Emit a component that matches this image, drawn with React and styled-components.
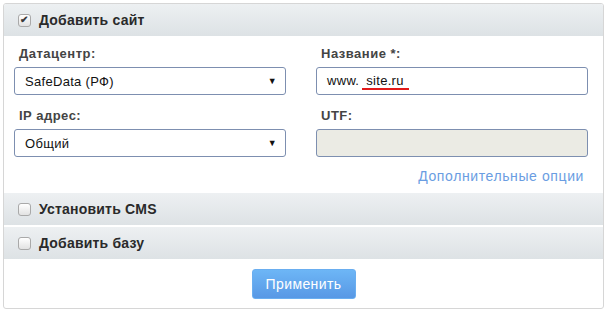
import styled, { createGlobalStyle } from "styled-components";

const GlobalStyle = createGlobalStyle`
  body {
    margin: 0;
    background: #ffffff;
    font-family: "Liberation Sans", Arial, sans-serif;
  }
`;

const Page = styled.div`
  padding: 3px 0 0 3px;
`;

const Panel = styled.div`
  width: 601px;
  height: 306px;
  box-sizing: border-box;
  border: 1px solid #d6d6d6;
  border-radius: 3px;
  background: #fff;
  display: flex;
  flex-direction: column;
  overflow: hidden;
`;

const SectionHeader = styled.div`
  height: 32px;
  box-sizing: border-box;
  display: flex;
  align-items: center;
  gap: 8px;
  padding: 0 0 0 14px;
  margin-top: ${(p) => (p.$gap ? "2px" : "0")};
  background: linear-gradient(to bottom, #edf0f2, #dde2e5);
  font-size: 14px;
  font-weight: bold;
  letter-spacing: 0.2px;
  color: #2a2a2a;
`;

const Check = styled.span`
  width: 13px;
  height: 13px;
  box-sizing: border-box;
  border: 1px solid #a9a9a9;
  border-radius: 3px;
  background: linear-gradient(to bottom, #ffffff, #e2e2e2);
  display: flex;
  align-items: center;
  justify-content: center;
  font-size: 10px;
  line-height: 1;
  color: #3a3a3a;
`;

const FormBody = styled.div`
  display: grid;
  grid-template-columns: 272px 272px;
  column-gap: 30px;
  align-content: start;
  padding: 8px 0 0 10px;
  height: 157px;
  box-sizing: border-box;
`;

const Field = styled.div`
  display: flex;
  flex-direction: column;
  margin-bottom: 11px;
`;

const Label = styled.div`
  font-size: 13px;
  font-weight: bold;
  letter-spacing: 0.5px;
  color: #444;
  padding-left: 5px;
  height: 23px;
  line-height: 19px;
`;

const Box = styled.div`
  height: 28px;
  box-sizing: border-box;
  border: 1px solid #7d8fb0;
  border-radius: 3px;
  background: ${(p) => (p.$disabled ? "#ebebe4" : "#fff")};
  display: flex;
  align-items: center;
  justify-content: space-between;
  padding: 0 8px 0 10px;
  font-size: 13px;
  letter-spacing: 0.3px;
  color: #111;
`;

const Arrow = styled.span`
  font-size: 9px;
  color: #111;
`;

const Marked = styled.span`
  display: inline-block;
  margin-left: 3px;
  padding: 0 5px 0 4px;
  line-height: 14px;
  border-bottom: 2px solid #e21a1a;
`;

const LinkRow = styled.div`
  grid-column: 2;
  text-align: right;
  padding-right: 4px;
  margin-top: -1px;
`;

const MoreLink = styled.a`
  font-size: 14px;
  letter-spacing: 0.6px;
  color: #6a9de2;
  text-decoration: none;
`;

const Footer = styled.div`
  flex: 1;
  display: flex;
  justify-content: center;
  padding-top: 9px;
  border-top: 1px solid #fff;
`;

const ApplyButton = styled.button`
  width: 104px;
  height: 30px;
  border: 1px solid #6aaef0;
  border-radius: 3px;
  background: linear-gradient(to bottom, #6db6f6, #5898e5);
  color: #fff;
  font-family: "Liberation Sans", Arial, sans-serif;
  font-size: 14px;
  letter-spacing: 0.4px;
  cursor: pointer;
`;

export default function App() {
  return (
    <Page>
      <GlobalStyle />
      <Panel>
        <SectionHeader>
          <Check>✔</Check>
          Добавить сайт
        </SectionHeader>
        <FormBody>
          <Field>
            <Label>Датацентр:</Label>
            <Box>
              SafeData (РФ)
              <Arrow>▼</Arrow>
            </Box>
          </Field>
          <Field>
            <Label>Название *:</Label>
            <Box>
              <span>
                www.<Marked>site.ru</Marked>
              </span>
            </Box>
          </Field>
          <Field>
            <Label>IP адрес:</Label>
            <Box>
              Общий
              <Arrow>▼</Arrow>
            </Box>
          </Field>
          <Field>
            <Label>UTF:</Label>
            <Box $disabled />
          </Field>
          <LinkRow>
            <MoreLink href="#">Дополнительные опции</MoreLink>
          </LinkRow>
        </FormBody>
        <SectionHeader>
          <Check />
          Установить CMS
        </SectionHeader>
        <SectionHeader $gap>
          <Check />
          Добавить базу
        </SectionHeader>
        <Footer>
          <ApplyButton>Применить</ApplyButton>
        </Footer>
      </Panel>
    </Page>
  );
}
